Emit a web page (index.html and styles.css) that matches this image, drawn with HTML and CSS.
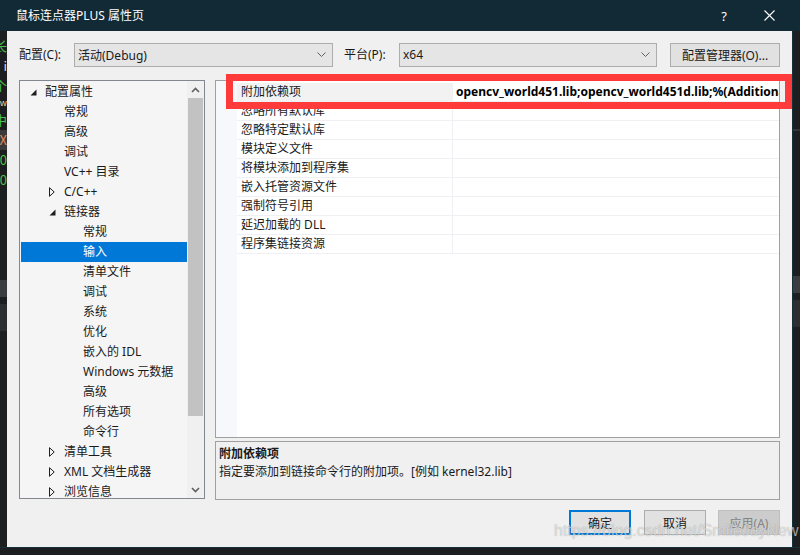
FILE: index.html
```html
<!DOCTYPE html>
<html lang="zh">
<head>
<meta charset="UTF-8">
<meta name="viewport" content="width=device-width">
<title>鼠标连点器PLUS 属性页</title>
<link rel="stylesheet" href="styles.css">
</head>
<body>
<div class="titlebar">
  <span class="title">鼠标连点器PLUS 属性页</span>
  <span class="tb-icon help">?</span>
  <span class="tb-icon close"><svg width="11" height="11" viewBox="0 0 11 11"><path d="M0.5 0.5L10.5 10.5M10.5 0.5L0.5 10.5" stroke="#ffffff" stroke-width="1.1"/></svg></span>
</div>

<div class="screen-row">
  <div class="edge edge-left">
    <div class="glyphs">
      <span class="g g-green">长</span>
      <span class="g g-white">i</span>
      <span class="g g-green">个</span>
      <span class="g g-small">w</span>
      <span class="g g-green">中</span>
      <span class="g g-box">X</span>
      <span class="g g-green">0</span>
      <span class="g g-green">0</span>
    </div>
    <div class="band band-a"></div>
    <div class="band band-b"></div>
  </div>

  <div class="window">
    <div class="toolbar">
      <label class="tb-label">配置(C):</label>
      <div class="combo combo-config">
        <span>活动(Debug)</span>
        <svg width="9" height="5" viewBox="0 0 9 5"><path d="M0.5 0.5L4.5 4.5L8.5 0.5" fill="none" stroke="#606060"/></svg>
      </div>
      <label class="tb-label tb-label-platform">平台(P):</label>
      <div class="combo combo-platform">
        <span>x64</span>
        <svg width="9" height="5" viewBox="0 0 9 5"><path d="M0.5 0.5L4.5 4.5L8.5 0.5" fill="none" stroke="#606060"/></svg>
      </div>
      <button class="btn btn-manager">配置管理器(O)...</button>
    </div>

    <div class="main">
      <div class="tree">
        <ul class="tree-list">
          <li class="node lvl0"><span class="exp"><svg width="7" height="7" viewBox="0 0 7 7"><path d="M6.5 0.5V6.5H0.5Z" fill="#1e1e1e"/></svg></span>配置属性</li>
          <li class="node lvl1"><span class="exp"></span>常规</li>
          <li class="node lvl1"><span class="exp"></span>高级</li>
          <li class="node lvl1"><span class="exp"></span>调试</li>
          <li class="node lvl1"><span class="exp"></span>VC++ 目录</li>
          <li class="node lvl1"><span class="exp"><svg width="6" height="10" viewBox="0 0 6 10"><path d="M0.5 0.7L5.2 5L0.5 9.3Z" fill="none" stroke="#1e1e1e"/></svg></span>C/C++</li>
          <li class="node lvl1"><span class="exp"><svg width="7" height="7" viewBox="0 0 7 7"><path d="M6.5 0.5V6.5H0.5Z" fill="#1e1e1e"/></svg></span>链接器</li>
          <li class="node lvl2"><span class="exp"></span>常规</li>
          <li class="node lvl2 selected"><span class="exp"></span>输入</li>
          <li class="node lvl2"><span class="exp"></span>清单文件</li>
          <li class="node lvl2"><span class="exp"></span>调试</li>
          <li class="node lvl2"><span class="exp"></span>系统</li>
          <li class="node lvl2"><span class="exp"></span>优化</li>
          <li class="node lvl2"><span class="exp"></span>嵌入的 IDL</li>
          <li class="node lvl2"><span class="exp"></span>Windows 元数据</li>
          <li class="node lvl2"><span class="exp"></span>高级</li>
          <li class="node lvl2"><span class="exp"></span>所有选项</li>
          <li class="node lvl2"><span class="exp"></span>命令行</li>
          <li class="node lvl1"><span class="exp"><svg width="6" height="10" viewBox="0 0 6 10"><path d="M0.5 0.7L5.2 5L0.5 9.3Z" fill="none" stroke="#1e1e1e"/></svg></span>清单工具</li>
          <li class="node lvl1"><span class="exp"><svg width="6" height="10" viewBox="0 0 6 10"><path d="M0.5 0.7L5.2 5L0.5 9.3Z" fill="none" stroke="#1e1e1e"/></svg></span>XML 文档生成器</li>
          <li class="node lvl1"><span class="exp"><svg width="6" height="10" viewBox="0 0 6 10"><path d="M0.5 0.7L5.2 5L0.5 9.3Z" fill="none" stroke="#1e1e1e"/></svg></span>浏览信息</li>
        </ul>
        <div class="scrollbar">
          <div class="sb-arrow"><svg width="9" height="6" viewBox="0 0 9 6"><path d="M1 5L4.5 1.5L8 5" fill="none" stroke="#606060" stroke-width="1.6"/></svg></div>
          <div class="sb-track"><div class="sb-thumb"></div></div>
          <div class="sb-arrow"><svg width="9" height="6" viewBox="0 0 9 6"><path d="M1 1L4.5 4.5L8 1" fill="none" stroke="#606060" stroke-width="1.6"/></svg></div>
        </div>
      </div>

      <div class="right">
        <div class="grid">
          <div class="gutter"></div>
          <div class="rows">
            <div class="prop-row active"><div class="prop-name">附加依赖项</div><div class="prop-value">opencv_world451.lib;opencv_world451d.lib;%(AdditionalDependencies)</div></div>
            <div class="prop-row"><div class="prop-name">忽略所有默认库</div><div class="prop-value"></div></div>
            <div class="prop-row"><div class="prop-name">忽略特定默认库</div><div class="prop-value"></div></div>
            <div class="prop-row"><div class="prop-name">模块定义文件</div><div class="prop-value"></div></div>
            <div class="prop-row"><div class="prop-name">将模块添加到程序集</div><div class="prop-value"></div></div>
            <div class="prop-row"><div class="prop-name">嵌入托管资源文件</div><div class="prop-value"></div></div>
            <div class="prop-row"><div class="prop-name">强制符号引用</div><div class="prop-value"></div></div>
            <div class="prop-row"><div class="prop-name">延迟加载的 DLL</div><div class="prop-value"></div></div>
            <div class="prop-row"><div class="prop-name">程序集链接资源</div><div class="prop-value"></div></div>
          </div>
        </div>
        <div class="desc">
          <div class="desc-title">附加依赖项</div>
          <div class="desc-text">指定要添加到链接命令行的附加项。[例如 kernel32.lib]</div>
        </div>
      </div>
    </div>

    <div class="footer">
      <button class="btn btn-default">确定</button>
      <button class="btn">取消</button>
      <button class="btn btn-disabled">应用(A)</button>
    </div>
  </div>

  <div class="edge edge-right">
    <div class="band band-top"></div>
    <div class="band band-a"></div>
    <div class="band band-b"></div>
  </div>
</div>
<div class="bottom-strip"></div>

<!-- annotation drawn over the screenshot -->
<div class="callout"></div>
<div class="watermark">https://blog.csdn.net/SmileJayNew</div>
</body>
</html>
```

FILE: styles.css
```css
* {
  box-sizing: border-box;
}
html, body {
  margin: 0;
  padding: 0;
}
body {
  width: 800px;
  height: 555px;
  overflow: hidden;
  position: relative;
  background: #1d1e1f;
  font-family: "Noto Sans", "Noto Sans CJK SC", sans-serif;
  font-size: 12px;
  color: #1a1a1a;
}

/* title bar */
.titlebar {
  height: 31px;
  background: #112a35;
  color: #ffffff;
  display: flex;
  align-items: center;
  padding-left: 16px;
  padding-right: 21px;
}
.titlebar .title {
  flex: 1;
  line-height: 16px;
}
.tb-icon {
  width: 20px;
  height: 20px;
  display: flex;
  align-items: center;
  justify-content: center;
}
.tb-icon.help {
  font-size: 13px;
  margin-right: 25px;
}

/* desktop strips around the dialog */
.screen-row {
  display: flex;
  height: 516px;
}
.edge {
  position: relative;
  overflow: hidden;
}
.edge-left {
  flex: 0 0 7px;
}
.edge-right {
  flex: 1;
  min-width: 0;
  border-left: 1px solid #16303b;
}
.glyphs {
  display: flex;
  flex-direction: column;
  align-items: flex-end;
  padding-top: 5px;
  font-family: "Noto Sans CJK SC", sans-serif;
  font-size: 13px;
}
.g {
  height: 20px;
  line-height: 20px;
  white-space: nowrap;
}
.g-green { color: #4cc04c; }
.g-white { color: #d8d8d8; }
.g-small { color: #e6d8a8; font-size: 9px; height: 14px; line-height: 14px; }
.g-box { color: #e08a5a; background: #3a3a3a; }
.band {
  height: 17px;
  background: #3a3c3f;
  margin-top: 90px;
}
.band-b {
  height: 27px;
  background: #2c2e30;
  margin-top: 7px;
}
.edge-right .band-top {
  height: 2px;
  margin-top: 98px;
  background: #333537;
}
.edge-right .band-a {
  margin-top: 145px;
}

/* dialog */
.window {
  flex: 0 0 785px;
  background: #f0f0f0;
  padding: 0 12px;
  min-width: 0;
}
.toolbar {
  margin-top: 11px;
  height: 25px;
  display: flex;
  align-items: center;
}
.tb-label {
  flex: 0 0 55px;
  line-height: 16px;
}
.tb-label-platform {
  margin-left: 11px;
}
.combo {
  height: 24px;
  background: #e5e5e5;
  border: 1px solid #adadad;
  display: flex;
  align-items: center;
  justify-content: space-between;
  padding: 0 6px 0 3px;
}
.combo-config { flex: 0 0 259px; }
.combo-platform { flex: 0 0 258px; }

.btn {
  height: 25px;
  width: 62px;
  background: #e1e1e1;
  border: 1px solid #adadad;
  font-family: "Noto Sans", "Noto Sans CJK SC", sans-serif;
  font-size: 12px;
  color: #1a1a1a;
  padding: 0;
}
.btn-manager {
  margin-left: 13px;
  flex: 0 0 110px;
  height: 24px;
}
.btn-default {
  border: 2px solid #0078d7;
}
.btn-disabled {
  background: #cccccc;
  border-color: #bfbfbf;
  color: #838383;
}

.main {
  margin-top: 13px;
  height: 420px;
  display: flex;
  gap: 10px;
}

/* tree */
.tree {
  flex: 0 0 186px;
  height: 419px;
  border: 1px solid #828790;
  background: #f5f5f5;
  display: flex;
}
.tree-list {
  flex: 1;
  min-width: 0;
  list-style: none;
  margin: 0;
  padding: 1px 0 0 1px;
  overflow: hidden;
}
.node {
  height: 20px;
  display: flex;
  align-items: center;
  white-space: nowrap;
  line-height: 16px;
}
.lvl0 { padding-left: 9px; }
.lvl1 { padding-left: 28px; }
.lvl2 { padding-left: 47px; }
.exp {
  flex: 0 0 15px;
  display: flex;
  align-items: center;
}
.node.selected {
  background: #0078d7;
  color: #ffffff;
}
.scrollbar {
  flex: 0 0 17px;
  display: flex;
  flex-direction: column;
  background: #f0f0f0;
}
.sb-arrow {
  height: 17px;
  display: flex;
  align-items: center;
  justify-content: center;
}
.sb-track {
  flex: 1;
}
.sb-thumb {
  height: 318px;
  margin: 0 1px;
  background: #c2c2c2;
}

/* property grid */
.right {
  flex: 1;
  min-width: 0;
  display: flex;
  flex-direction: column;
  gap: 3px;
}
.grid {
  height: 358px;
  border: 1px solid #a0a0a0;
  background: #ffffff;
  display: flex;
}
.gutter {
  flex: 0 0 21px;
  background: #f6f8fb;
}
.rows {
  flex: 1;
  min-width: 0;
  padding-top: 2px;
  overflow: hidden;
}
.prop-row {
  height: 19px;
  display: flex;
  border-bottom: 1px solid #eef0f4;
  line-height: 16px;
}
.prop-name {
  flex: 0 0 215px;
  padding-left: 4px;
  display: flex;
  align-items: center;
  white-space: nowrap;
}
.prop-value {
  flex: 1;
  min-width: 0;
  border-left: 1px solid #eef0f4;
  padding-left: 3px;
  display: flex;
  align-items: center;
  white-space: nowrap;
  overflow: hidden;
}
.prop-row.active .prop-name {
  background: #f2f2f2;
}
.prop-row.active .prop-value {
  background: #ffffff;
  font-weight: 700;
  color: #000000;
}

.desc {
  height: 59px;
  border: 1px solid #a0a0a0;
  background: #f0f0f0;
  padding: 3px 3px;
}
.desc-title {
  font-weight: 700;
  line-height: 18px;
}
.desc-text {
  line-height: 18px;
}

.footer {
  margin-top: 10px;
  display: flex;
  justify-content: flex-end;
  gap: 12px;
}
.footer .btn-default {
  margin-right: 1px;
}

.bottom-strip {
  height: 8px;
  border-top: 1px solid #16303b;
}

/* red highlight box and blog watermark */
.callout {
  position: absolute;
  left: 226px;
  top: 74px;
  width: 566px;
  height: 35px;
  border: 7px solid #ff3a3a;
}
.watermark {
  position: absolute;
  left: 554px;
  top: 522px;
  font-family: "Liberation Sans", Arial, sans-serif;
  font-size: 16px;
  line-height: 18px;
  color: rgba(255, 255, 255, 0.6);
  text-shadow: 0 0 1px rgba(0, 0, 0, 0.35);
  white-space: nowrap;
}
```
